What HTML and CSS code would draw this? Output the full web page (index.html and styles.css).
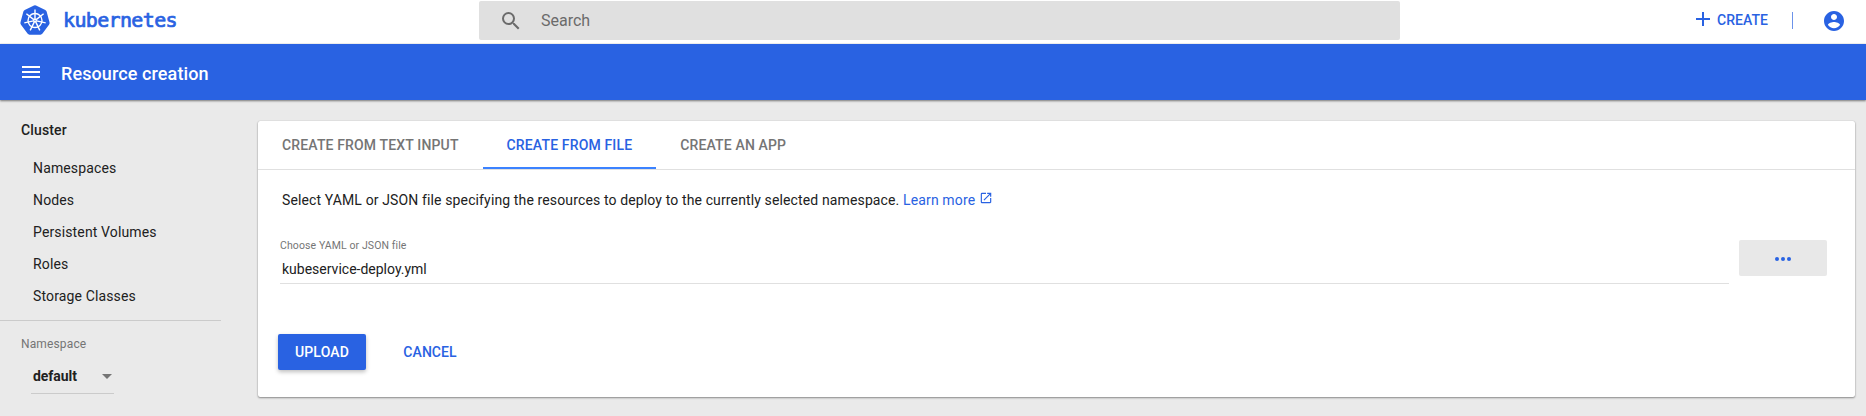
FILE: index.html
```html
<!DOCTYPE html>
<html lang="en">
<head>
<meta charset="utf-8">
<title>Kubernetes Dashboard</title>
<link rel="stylesheet" href="styles.css">
</head>
<body>
<header class="topbar">
  <a class="brand">
    <svg class="brand-logo" width="30" height="30" viewBox="0 0 30 30">
      <path class="logo-body" d="M14 .5Q15 0 16 .5L25.300 5Q26.300 5.500 26.600 6.600L29.500 17.300Q29.900 18.600 29 19.700L22.500 28.600Q21.700 29.700 20.500 29.700H9.500Q8.300 29.700 7.500 28.600L1 19.700Q.1 18.600 .5 17.300L3.400 6.600Q3.700 5.500 4.700 5Z"/>
      <g class="logo-wheel">
        <circle cx="15" cy="15.500" r="7"/>
        <circle cx="15" cy="15.500" r="1.300"/>
        <path d="M15 14V4.500M16.200 14.600L23.600 8.700M16.500 15.900L25.700 17.900M15.700 16.900L19.800 25.400M14.300 16.900L10.200 25.400M13.500 15.900L4.300 17.900M13.800 14.600L6.400 8.700"/>
      </g>
    </svg>
    <span class="brand-name">kubernetes</span>
  </a>
  <div class="search">
    <svg width="24" height="24" viewBox="0 0 24 24"><path d="M15.500 14h-.79l-.28-.27A6.470 6.470 0 0 0 16 9.500 6.500 6.500 0 1 0 9.500 16c1.610 0 3.090-.59 4.230-1.570l.27.28v.79l5 4.990L20.490 19l-4.990-5zm-6 0C7.010 14 5 11.990 5 9.500S7.010 5 9.500 5 14 7.010 14 9.500 11.990 14 9.500 14z"/></svg>
    <span>Search</span>
  </div>
  <div class="actions">
    <svg class="plus" width="24" height="24" viewBox="0 0 24 24"><path d="M19 13h-6v6h-2v-6H5v-2h6V5h2v6h6z"/></svg>
    <span class="create">CREATE</span>
    <span class="bar"></span>
    <svg class="account" width="24" height="24" viewBox="0 0 24 24"><path d="M12 2C6.480 2 2 6.480 2 12s4.480 10 10 10 10-4.480 10-10S17.520 2 12 2zm0 3c1.660 0 3 1.340 3 3s-1.340 3-3 3-3-1.340-3-3 1.340-3 3-3zm0 14.200c-2.500 0-4.710-1.280-6-3.220.03-1.990 4-3.080 6-3.080 1.990 0 5.970 1.090 6 3.080-1.290 1.940-3.500 3.220-6 3.220z"/></svg>
  </div>
</header>
<div class="titlebar">
  <svg width="24" height="24" viewBox="0 0 24 24"><path d="M3 18h18v-2H3v2zm0-5h18v-2H3v2zm0-7v2h18V6H3z"/></svg>
  <h1>Resource creation</h1>
</div>
<div class="layout">
  <nav class="sidebar">
    <div class="nav-head">Cluster</div>
    <a class="nav-item">Namespaces</a>
    <a class="nav-item">Nodes</a>
    <a class="nav-item">Persistent Volumes</a>
    <a class="nav-item">Roles</a>
    <a class="nav-item">Storage Classes</a>
    <div class="nav-label">Namespace</div>
    <div class="select"><span>default</span><i class="caret"></i></div>
  </nav>
  <main class="card">
    <div class="tabs">
      <div class="tab">CREATE FROM TEXT INPUT</div>
      <div class="tab active">CREATE FROM FILE</div>
      <div class="tab">CREATE AN APP</div>
    </div>
    <p class="intro">Select YAML or JSON file specifying the resources to deploy to the currently selected namespace. <a class="learn">Learn more</a><svg width="14" height="14" viewBox="0 0 24 24"><path d="M19 19H5V5h7V3H5a2 2 0 0 0-2 2v14a2 2 0 0 0 2 2h14c1.100 0 2-.9 2-2v-7h-2v7zM14 3v2h3.590l-9.830 9.830 1.410 1.410L19 6.410V10h2V3h-7z"/></svg></p>
    <div class="file-row">
      <div class="field">
        <div class="field-label">Choose YAML or JSON file</div>
        <div class="field-value">kubeservice-deploy.yml</div>
      </div>
      <div class="browse"><i></i><i></i><i></i></div>
    </div>
    <div class="buttons">
      <div class="upload">UPLOAD</div>
      <div class="cancel">CANCEL</div>
    </div>
  </main>
</div>
</body>
</html>
```
FILE: styles.css
```css
* { box-sizing: border-box; }
body {
  margin: 0;
  height: 416px;
  overflow: hidden;
  background: #eaeaea;
  color: #212121;
  font: 14px/20px Roboto, sans-serif;
  letter-spacing: .14px;
}
svg { display: block; flex: none; fill: currentColor; }

.topbar {
  display: flex;
  height: 44px;
  background: #fff;
  color: #2962e2;
  border-bottom: 1px solid #f5f5f5;
}
.brand { display: flex; width: 479px; padding: 5px 0 0 20px; }
.logo-body { fill: #2962e2; }
.logo-wheel { fill: none; stroke: #fff; stroke-width: 1.4; }
.brand-name {
  margin: 5px 0 0 13px;
  font: 20px/20px "DejaVu Sans Mono", monospace;
  letter-spacing: -.65px;
  -webkit-text-stroke: .7px #2962e2;
}
.search {
  display: flex;
  align-items: center;
  width: 921px;
  height: 39px;
  margin-top: 1px;
  padding-left: 20px;
  border-radius: 2px;
  background: #e0e0e0;
  color: #6b6b6b;
  font-size: 16px;
  letter-spacing: 0;
}
.search span { margin-left: 18px; }
.actions { display: flex; flex: 1; padding-left: 291px; font-weight: 500; }
.plus { margin-top: 7px; }
.create { margin: 10px 0 0 2px; width: 51px; letter-spacing: .05px; }
.bar { width: 1px; height: 17px; margin: 12px 0 0 24px; background: #6c93ea; }
.account { margin: 9px 0 0 29px; }

.titlebar {
  position: relative;
  display: flex;
  align-items: center;
  height: 56px;
  padding-left: 19px;
  background: #2962e2;
  color: #fff;
  box-shadow: 0 1px 2px rgba(0,0,0,.5);
}
.titlebar svg { margin-top: -1px; }
.titlebar h1 { margin: 4px 0 0 18px; font-size: 18px; font-weight: 500; letter-spacing: .1px; }

.layout { display: flex; }
.sidebar { width: 221px; padding-top: 20px; }
.nav-head { padding-left: 21px; margin-bottom: 12px; font-weight: 500; }
.nav-item { display: block; height: 32px; padding: 6px 0 0 33px; }
.nav-label {
  margin-top: 8px;
  padding: 13px 0 0 21px;
  border-top: 1px solid #cbcbcb;
  color: #757575;
  font-size: 12px;
}
.select {
  display: flex;
  align-items: center;
  justify-content: space-between;
  width: 83px;
  height: 35px;
  margin: 5px 0 0 31px;
  padding: 0 2px 0 2px;
  border-bottom: 1px solid #cbcbcb;
  font-weight: 700;
  letter-spacing: -.05px;
}
.caret { border: 5px solid transparent; border-top-color: #757575; border-bottom: 0; }

.card {
  width: 1597px;
  height: 276px;
  margin: 21px 0 0 37px;
  border-radius: 2px;
  background: #fff;
  box-shadow: 0 1px 2px rgba(0,0,0,.4), 0 0 1px rgba(0,0,0,.25);
}
.tabs { display: flex; height: 49px; border-bottom: 1px solid #e0e0e0; }
.tab { height: 48px; padding: 14px 24px 0; color: #757575; font-weight: 500; letter-spacing: .15px; }
.tab.active { color: #2962e2; border-bottom: 2px solid #3b82ff; }
.intro { display: flex; margin: 20px 0 0 24px; white-space: pre; letter-spacing: .13px; }
.learn, .intro svg { color: #2962e2; }
.intro svg { margin: 1px 0 0 4px; }
.file-row { display: flex; margin: 26px 0 0 22px; }
.field { width: 1449px; height: 48px; border-bottom: 1px solid #e0e0e0; }
.field-label { color: #757575; font-size: 10.5px; height: 18px; line-height: 20px; letter-spacing: .1px; }
.field-value { padding: 5px 0 0 2px; letter-spacing: 0; }
.browse {
  display: flex;
  align-items: center;
  justify-content: center;
  gap: 2px;
  width: 88px;
  height: 36px;
  margin: 4px 0 0 10px;
  padding-top: 2px;
  border-radius: 2px;
  background: #e8e8e8;
}
.browse i { width: 4px; height: 4px; border-radius: 50%; background: #2962e2; }
.buttons { display: flex; margin: 50px 0 0 20px; font-weight: 500; line-height: 36px; text-align: center; }
.upload {
  width: 88px;
  height: 36px;
  border-radius: 2px;
  background: #2962e2;
  color: #fff;
  box-shadow: 0 2px 4px rgba(0,0,0,.26);
}
.cancel { width: 88px; margin-left: 20px; color: #2962e2; letter-spacing: .05px; }
```
